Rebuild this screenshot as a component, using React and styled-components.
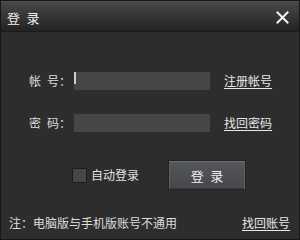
import React from "react";
import styled, { createGlobalStyle } from "styled-components";

const Global = createGlobalStyle`
  html, body { margin: 0; padding: 0; background: #2d2d2d; }
  body { font-family: "Noto Sans CJK SC", "Noto Sans", sans-serif; }
  * { box-sizing: border-box; }
`;

const Window = styled.div`
  width: 300px;
  height: 240px;
  border: 1px solid #171717;
  display: flex;
  flex-direction: column;
  background: #2d2d2d;
  color: #e4e4e4;
  font-size: 12px;
  line-height: 1;
`;

const TitleBar = styled.div`
  height: 31px;
  flex: none;
  display: flex;
  align-items: center;
  justify-content: space-between;
  padding: 2px 10px 0 6px;
  background: linear-gradient(#484848 0%, #373737 45%, #232323 100%);
  border-top: 1px solid #4e4e4e;
  border-bottom: 1px solid #1a1a1a;
`;

const Title = styled.span`
  font-size: 13px;
  color: #f0f0f0;
`;

const Close = styled.svg`
  width: 13px;
  height: 13px;
  display: block;
`;

const Body = styled.div`
  flex: 1;
  display: flex;
  flex-direction: column;
  padding: 40px 9px 10px 8px;
`;

const Form = styled.div`
  display: grid;
  grid-template-columns: 42px 136px auto;
  column-gap: 3px;
  row-gap: 24px;
  align-items: center;
  padding-left: 20px;
`;

const Label = styled.span`
  white-space: nowrap;
  color: #dedede;
`;

const Field = styled.div`
  position: relative;
  height: 18px;
  background: #464646;
  &::after {
    content: "";
    display: ${(p) => (p.$focused ? "block" : "none")};
    position: absolute;
    left: 0;
    top: 0;
    width: 2px;
    height: 12px;
    background: #cfcfcf;
  }
`;

const Link = styled.a`
  color: #e8e8e8;
  text-decoration: underline;
  text-underline-offset: 2px;
  margin-left: ${(p) => p.$indent || 0}px;
  white-space: nowrap;
  cursor: pointer;
`;

const ActionRow = styled.div`
  display: flex;
  align-items: center;
  margin-top: 28px;
  padding-left: 63px;
`;

const Check = styled.span`
  width: 15px;
  height: 15px;
  background: #464646;
  border: 1px solid #1c1c1c;
  border-radius: 1px;
  margin-right: 4px;
`;

const CheckLabel = styled.span`
  color: #e2e2e2;
`;

const Button = styled.button`
  margin-left: 29px;
  width: 78px;
  height: 30px;
  font-family: inherit;
  font-size: 13px;
  color: #f0f0f0;
  background: linear-gradient(#55575a, #45474a);
  border: 1px solid #222;
  box-shadow: inset 0 1px 0 #6b6d70, inset 1px 0 0 #5e6063, inset -1px 0 0 #5e6063, inset 0 -1px 0 #3b3c3e;
  border-radius: 1px;
  padding: 0;
`;

const Footer = styled.div`
  margin-top: auto;
  display: flex;
  justify-content: space-between;
  align-items: center;
`;

const Note = styled.span`
  color: #dedede;
`;

export default function App() {
  return (
    <>
      <Global />
      <Window>
        <TitleBar>
          <Title>登{"\u2002"}录</Title>
          <Close viewBox="0 0 13 13">
            <path d="M1.5 1.5 L11.5 11.5 M11.5 1.5 L1.5 11.5" stroke="#f2f2f2" strokeWidth="2" strokeLinecap="square" />
          </Close>
        </TitleBar>
        <Body>
          <Form>
            <Label>帐{"\u2002"}号：</Label>
            <Field $focused />
            <Link $indent={11}>注册帐号</Link>
            <Label>密{"\u2002"}码：</Label>
            <Field />
            <Link $indent={11}>找回密码</Link>
          </Form>
          <ActionRow>
            <Check />
            <CheckLabel>自动登录</CheckLabel>
            <Button>登{"\u2002"}录</Button>
          </ActionRow>
          <Footer>
            <Note>注：电脑版与手机版账号不通用</Note>
            <Link>找回账号</Link>
          </Footer>
        </Body>
      </Window>
    </>
  );
}
